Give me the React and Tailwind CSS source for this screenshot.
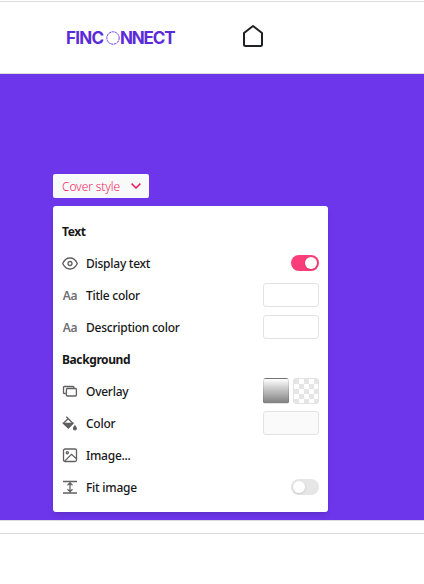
import React from "react";

function Icon({ children, className = "" }) {
  return (
    <svg
      width="16"
      height="16"
      viewBox="0 0 16 16"
      fill="none"
      stroke="currentColor"
      strokeWidth="1.300"
      className={"shrink-0 " + className}
    >
      {children}
    </svg>
  );
}

function EyeIcon() {
  return (
    <Icon>
      <path d="M.7 7.500C2.200 4.200 4.800 2 8 2s5.800 2.200 7.300 5.500c-1.500 3.300-4.100 5.500-7.300 5.500S2.200 10.800.7 7.500Z" />
      <circle cx="8" cy="7.500" r="2" />
    </Icon>
  );
}

function LetterIcon() {
  return (
    <span className="flex h-4 w-4 shrink-0 items-center justify-center text-[12px] font-semibold tracking-[-0.3px] text-[#707070]">
      Aa
    </span>
  );
}

function OverlayIcon() {
  return (
    <Icon>
      <path d="M3.800 9.500H2.300a.8.8 0 0 1-.8-.8V3.300a.8.8 0 0 1 .8-.8h8.700a.8.8 0 0 1 .8.8v1.200" />
      <rect x="4.400" y="4.500" width="10" height="7.500" rx="1" />
    </Icon>
  );
}

function BucketIcon() {
  return (
    <Icon>
      <path d="M4.300.8 10.800 7.300 6.300 11.900 1.500 7.300 6 2.800" strokeLinejoin="round" />
      <path d="M1.500 7.300h9.300L6.300 11.900Z" fill="currentColor" />
      <path d="M12.900 9.800c.9 1.200 1.400 1.900 1.400 2.600a1.400 1.400 0 0 1-2.800 0c0-.7.5-1.400 1.400-2.600Z" fill="currentColor" />
    </Icon>
  );
}

function ImageIcon() {
  return (
    <Icon>
      <rect x="1.500" y="1" width="13" height="12.500" rx="1.500" />
      <circle cx="5.300" cy="4.700" r="1.100" />
      <path d="m2.600 13.100 6.900-6.800 4.700 4.200" />
    </Icon>
  );
}

function FitIcon() {
  return (
    <Icon>
      <path d="M1 1.500h14M1 13h14M8 2.900v8.700M5.500 5.300 8 2.900l2.500 2.400M5.500 9.200 8 11.600l2.500-2.400" />
    </Icon>
  );
}

function Row({ icon, label, children }) {
  return (
    <div className="flex h-8 items-center text-[#606060]">
      {icon}
      <span className="ml-2 text-[12px] font-medium tracking-[-0.25px] text-[#171717]">{label}</span>
      <div className="mb-0.5 ml-auto flex gap-1">{children}</div>
    </div>
  );
}

function Heading({ children }) {
  return (
    <h2 className="flex h-8 items-center text-[12px] font-bold tracking-[-0.4px] text-[#171717]">{children}</h2>
  );
}

function Toggle({ on }) {
  return (
    <span
      className={
        "flex h-4 w-7 items-center rounded-full px-0.5 " +
        (on ? "justify-end bg-[#fa3e7b]" : "justify-start bg-[#e6e6e6]")
      }
    >
      <span className="h-3 w-3 rounded-full bg-white shadow-sm" />
    </span>
  );
}

export default function App() {
  return (
    <div className="h-[584px] w-[424px] overflow-hidden bg-white pt-px font-['Noto_Sans','Open_Sans',sans-serif]">
      <header className="flex h-[73px] items-center border-y border-[#dcdcdc] pl-[66px]">
        <div className="flex h-5 w-[110px] items-center font-['Inter',sans-serif] text-[17px] leading-5 font-bold text-[#5b2bd9]">
          <span className="w-10 tracking-[-0.7px]">FINC</span>
          <svg width="14" height="14" viewBox="0 0 14 14" className="shrink-0">
            <circle cx="7" cy="7" r="6.200" fill="none" stroke="currentColor" strokeWidth=".9" strokeDasharray="2.500 .5" />
          </svg>
          <span className="w-14 tracking-[-1.15px]">NNECT</span>
        </div>
        <svg width="24" height="24" viewBox="0 0 24 24" className="mb-[3px] ml-[65px] shrink-0" fill="none" stroke="#202124" strokeWidth="2" strokeLinejoin="round">
          <path d="M3 9 12 2l9 7v11.500a1.500 1.500 0 0 1-1.500 1.500h-15A1.500 1.500 0 0 1 3 20.500Z" />
        </svg>
      </header>
      <main className="h-[447px] border-b border-[#dcdcdc] bg-[#6d36eb] pt-[100px] pl-[53px]">
        <button className="flex h-6 w-24 items-center justify-between rounded-[2px] bg-[#f8f9f9] pr-2 pl-[9px] text-[12px] font-light tracking-[-0.1px] text-[#f01e62]">
          <span className="pt-0.5">Cover style</span>
          <svg width="10" height="6" viewBox="0 0 10 6" fill="none" stroke="currentColor" strokeWidth="1.500">
            <path d="m.6.6 4.400 4.400L9.400.6" />
          </svg>
        </button>
        <section className="mt-2 h-[306px] w-[275px] rounded-[3px] bg-white px-[9px] pt-[10px] shadow-md">
          <Heading>Text</Heading>
          <Row icon={<EyeIcon />} label="Display text">
            <Toggle on />
          </Row>
          <Row icon={<LetterIcon />} label="Title color">
            <span className="h-6 w-14 rounded-[3px] border border-[#e3e3e3]" />
          </Row>
          <Row icon={<LetterIcon />} label="Description color">
            <span className="h-6 w-14 rounded-[3px] border border-[#e3e3e3]" />
          </Row>
          <Heading>Background</Heading>
          <Row icon={<OverlayIcon />} label="Overlay">
            <span className="h-[26px] w-[26px] rounded-[3px] border border-black/10 bg-linear-to-b from-white to-[#808080]" />
            <span className="h-[26px] w-[26px] rounded-[3px] border border-[#e3e3e3] bg-[conic-gradient(#fff_25%,#e5e5e5_0_50%,#fff_0_75%,#e5e5e5_0)] bg-[length:10px_10px]" />
          </Row>
          <Row icon={<BucketIcon />} label="Color">
            <span className="h-6 w-14 rounded-[3px] border border-[#e3e3e3] bg-[#fafafa]" />
          </Row>
          <Row icon={<ImageIcon />} label="Image..." />
          <Row icon={<FitIcon />} label="Fit image">
            <Toggle />
          </Row>
        </section>
      </main>
      <div className="h-[13px] border-b border-[#dcdcdc]" />
    </div>
  );
}
